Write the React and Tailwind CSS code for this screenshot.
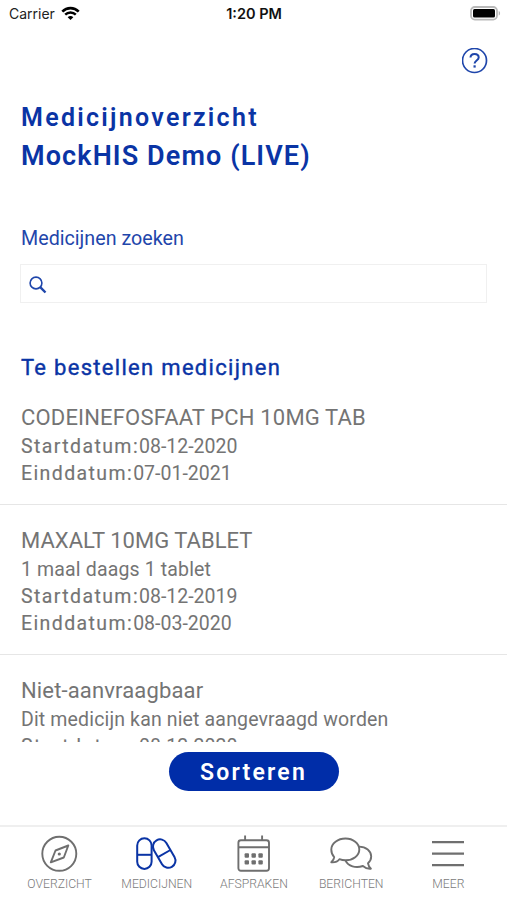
const ROBOTO = "font-['Roboto','Liberation_Sans',sans-serif]";

function WifiIcon() {
  return (
    <svg className="h-[15px] w-[19px]" viewBox="0 0 19 15" fill="none">
      <path d="M1.3 5.6C5.9.9 13.1.9 17.7 5.6" stroke="#000" strokeWidth="2.6" />
      <path d="M4.2 8.7C7.1 5.8 11.9 5.8 14.8 8.7" stroke="#000" strokeWidth="2.4" />
      <path d="M6.7 11.2c1.6-1.6 4-1.6 5.6 0L9.5 14z" fill="#000" />
    </svg>
  );
}

function BatteryIcon() {
  return (
    <svg className="h-[15px] w-[31px]" viewBox="0 0 31 15">
      <rect x="1" y="1" width="26" height="12.6" rx="3.8" fill="#fff" stroke="#b9b9b9" strokeWidth="1.8" />
      <rect x="3" y="3" width="22" height="8.6" rx="1.5" fill="#000" />
      <path d="M28.7 5v4.6c1.9-.6 1.9-4 0-4.6z" fill="#b5b5b5" />
    </svg>
  );
}

function HelpIcon() {
  return (
    <svg className="h-[26px] w-[26px]" viewBox="0 0 26 26" fill="none" stroke="#1f46ab">
      <circle cx="12.5" cy="12.5" r="12" strokeWidth="1.7" />
      <path d="M8.500 9.600c0-2.300 1.700-3.700 4.100-3.700s4.100 1.300 4.100 3.500c0 3-4.100 3.200-4.100 6.100" strokeWidth="2" />
      <path d="M12.600 17.300v2.300" strokeWidth="2.200" />
    </svg>
  );
}

function SearchIcon() {
  return (
    <svg className="h-[18px] w-[18px]" viewBox="0 0 18 18" fill="none" stroke="#1f46ab">
      <circle cx="7" cy="7" r="5.900" strokeWidth="1.600" />
      <path d="M11.200 11.200l5.300 5.300" strokeWidth="2.400" />
    </svg>
  );
}

function CompassIcon() {
  return (
    <svg className="h-10 w-11" viewBox="0 0 44 40" fill="none" stroke="#6f6f6f" strokeWidth="1.900">
      <circle cx="21.300" cy="19.800" r="17" />
      <path d="M30.300 11.500L17.500 16.500 12.800 28.400 25.800 23.500z" strokeLinejoin="round" />
      <circle cx="21.300" cy="20" r="1.600" fill="#6f6f6f" stroke="none" />
    </svg>
  );
}

function PillsIcon() {
  return (
    <svg className="h-10 w-11" viewBox="0 0 44 40" fill="none" stroke="#0a34a5" strokeWidth="2">
      <rect x="2.200" y="4.300" width="14.400" height="30.600" rx="7.200" />
      <path d="M2.200 20.800h14.400" />
      <g transform="rotate(-30 29.200 19.600)">
        <rect x="22" y="4.300" width="14.400" height="30.600" rx="7.200" />
        <path d="M22 19.600h14.400" />
      </g>
    </svg>
  );
}

function CalendarIcon() {
  return (
    <svg className="h-10 w-11" viewBox="0 0 44 40" fill="none" stroke="#6f6f6f" strokeWidth="1.900">
      <rect x="6.400" y="6.200" width="30.600" height="30.600" rx="2.500" />
      <path d="M6.400 13.300h30.600M13.100 1.500v5M30.100 1.500v5" />
      <g fill="#6f6f6f" stroke="none">
        <rect x="12.600" y="19.300" width="4.400" height="4.400" rx="1" />
        <rect x="19.500" y="19.300" width="4.400" height="4.400" rx="1" />
        <rect x="26.400" y="19.300" width="4.400" height="4.400" rx="1" />
        <rect x="12.600" y="26.200" width="4.400" height="4.400" rx="1" />
        <rect x="19.500" y="26.200" width="4.400" height="4.400" rx="1" />
        <rect x="26.400" y="26.200" width="4.400" height="4.400" rx="1" />
      </g>
    </svg>
  );
}

function ChatIcon() {
  return (
    <svg className="h-10 w-11" viewBox="0 0 44 40" fill="none" stroke="#6f6f6f" strokeWidth="1.900" strokeLinejoin="round">
      <path d="M16.500 4.500C24 4.500 30.300 9.300 30.300 15.500S24 26.300 16.500 26.300c-2.200 0-4.300-.4-6.100-1.100C8.500 27.800 5.500 28.600 2.300 28.300c1.700-1.500 2.700-3.200 2.900-5.200C3.100 21 2.300 18.100 2.300 15.500 2.300 9.300 8.900 4.500 16.500 4.500z" />
      <path d="M30 12.600c7 .2 12.200 4.300 12.200 9.900 0 2.700-1.200 5-3.200 6.800.3 1.900 1.200 3.700 2.900 5.400-3.200.3-6-.9-8-2.700-7.200 2.400-14.700.3-17.500-5.700" />
    </svg>
  );
}

function MenuIcon() {
  return (
    <svg className="h-10 w-11" viewBox="0 0 44 40" stroke="#6f6f6f" strokeWidth="2.200">
      <path d="M6 8.200h32M6 19.700h32M6 31.200h32" />
    </svg>
  );
}

function DateLine({ label, value }) {
  return (
    <p className="flex h-[27px] items-center text-[19.500px]">
      <span className="tracking-[1.400px] [-webkit-text-stroke:0.15px]">{label}:</span>
      <span>{value}</span>
    </p>
  );
}

function Medicine({ name, tracking, note, start, end }) {
  return (
    <li className="border-b border-[#e6e6e6] px-[21px] pt-5 pb-[17px]">
      <h3 className={`flex h-[31px] items-center text-[22px] ${tracking}`}>{name}</h3>
      {note && <p className="flex h-[27px] items-center text-[19.500px] tracking-[0.150px]">{note}</p>}
      <DateLine label="Startdatum" value={start} />
      {end && <DateLine label="Einddatum" value={end} />}
    </li>
  );
}

const medicines = [
  { name: "CODEINEFOSFAAT PCH 10MG TAB", tracking: "tracking-[0.170px]", start: "08-12-2020", end: "07-01-2021" },
  { name: "MAXALT 10MG TABLET", tracking: "tracking-[0.030px]", note: "1 maal daags 1 tablet", start: "08-12-2019", end: "08-03-2020" },
  { name: "Niet-aanvraagbaar", tracking: "tracking-[0.150px]", note: "Dit medicijn kan niet aangevraagd worden", start: "08-12-2020" },
];

const tabs = [
  { label: "OVERZICHT", Icon: CompassIcon },
  { label: "MEDICIJNEN", Icon: PillsIcon },
  { label: "AFSPRAKEN", Icon: CalendarIcon },
  { label: "BERICHTEN", Icon: ChatIcon },
  { label: "MEER", Icon: MenuIcon },
];

export default function App() {
  return (
    <div className={`flex h-[900px] w-[507px] flex-col overflow-hidden bg-white text-[#747474] ${ROBOTO}`}>
      <header className="grid h-[27px] shrink-0 grid-cols-3 items-center pr-[7px] pl-[8px] font-['Inter','Liberation_Sans',sans-serif] text-[14px]">
        <div className="flex items-center gap-[6px] pl-px text-[#222]">
          <span>Carrier</span>
          <WifiIcon />
        </div>
        <span className="pt-px text-center text-[14.500px] font-semibold text-[#111]">1:20 PM</span>
        <div className="-mr-px flex justify-end">
          <BatteryIcon />
        </div>
      </header>

      <div className="flex shrink-0 justify-end pt-[21px] pr-[19px]">
        <HelpIcon />
      </div>

      <main className="flex min-h-0 flex-1 flex-col">
        <div className="shrink-0 pr-[20px] pl-[21px] text-[#0a34a5]">
          <h1 className="pt-6 font-semibold">
            <span className="flex h-[39px] items-center text-[25px] tracking-[2.280px]">Medicijnoverzicht</span>
            <span className="flex h-[39px] items-center text-[27px] tracking-[1.100px]">MockHIS Demo (LIVE)</span>
          </h1>
          <h2 className="mt-[51px] flex h-[24px] items-center text-[19.700px] text-[#1f46ab]">Medicijnen zoeken</h2>
          <div className="mt-[13px] -ml-px flex h-[39px] items-center border border-[#f0f0f0] pt-[2px] pl-[8px]">
            <SearchIcon />
          </div>
          <h2 className="mt-[50px] flex h-[28px] items-center text-[22px] tracking-[1.300px] [-webkit-text-stroke:0.4px]">Te bestellen medicijnen</h2>
        </div>
        <ul className="h-[361px] shrink-0 overflow-hidden pt-px">
          {medicines.map((m) => (
            <Medicine key={m.name} {...m} />
          ))}
        </ul>
        <div className="flex shrink-0 justify-center pt-[10px]">
          <button className="h-[39px] w-[170px] rounded-full bg-[#002da8] pt-[4px] text-[23px] font-semibold tracking-[2.200px] text-white">Sorteren</button>
        </div>
      </main>

      <nav className="grid h-[75px] shrink-0 grid-cols-5 border-t-2 border-[#efefef] pt-[7px] pr-[10px] pl-[11px]">
        {tabs.map(({ label, Icon }) => (
          <div key={label} className="flex flex-col items-center">
            <Icon />
            <span className="mt-[2px] text-[12.200px] leading-[16px] font-light whitespace-nowrap text-[#7a7a7a]">{label}</span>
          </div>
        ))}
      </nav>
    </div>
  );
}
